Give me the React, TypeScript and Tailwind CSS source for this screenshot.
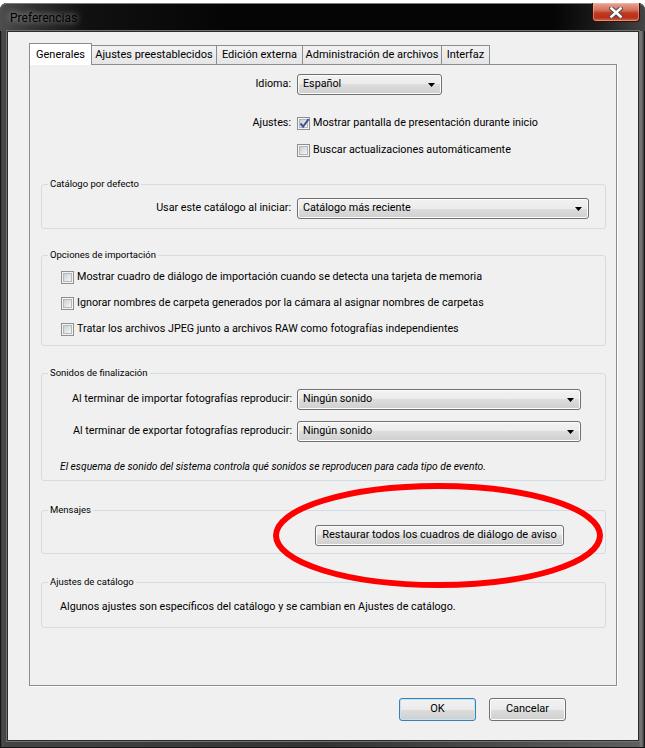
import React from 'react';

type ComboProps = { value: string; className: string };

function Combo({ value, className }: ComboProps) {
  return (
    <div
      className={`flex h-[21px] items-center justify-between rounded-[3px] border border-[#707070] bg-[linear-gradient(#f2f2f2_0%,#ebebeb_50%,#dddddd_50%,#cfcfcf_100%)] pl-[5px] pr-[6px] shadow-[inset_0_0_0_1px_#fcfcfc] ${className}`}
    >
      <span className="text-[10.75px] leading-none">{value}</span>
      <svg width="7" height="4" viewBox="0 0 7 4">
        <path d="M0 0h7L3.5 4z" fill="#000" />
      </svg>
    </div>
  );
}

function Checkbox({ checked = false }: { checked?: boolean }) {
  return (
    <span className="flex h-[13px] w-[13px] shrink-0 items-center justify-center border border-[#8e8f8f] bg-[#f4f4f4]">
      <span className="relative flex h-[9px] w-[9px] items-center justify-center border border-[#b3b8bd] bg-[linear-gradient(135deg,#cbcfd5,#f6f6f6)]">
        {checked && (
          <svg className="absolute -left-[1px] -top-[2px]" width="11" height="11" viewBox="0 0 11 11">
            <path d="M1.5 5.5l2.6 3.2L9.6 1.2" fill="none" stroke="#41539a" strokeWidth="2" />
          </svg>
        )}
      </span>
    </span>
  );
}

function CheckRow({ checked, label }: { checked?: boolean; label: string }) {
  return (
    <div className="flex h-[17px] items-center gap-[3px]">
      <Checkbox checked={checked} />
      <span className="text-[10.75px] leading-none">{label}</span>
    </div>
  );
}

function WinButton({ label, className, primary }: { label: string; className: string; primary?: boolean }) {
  return (
    <div
      className={`flex items-center justify-center rounded-[3px] border bg-[linear-gradient(#f2f2f2_0%,#ebebeb_50%,#dddddd_50%,#cfcfcf_100%)] text-[11px] ${
        primary
          ? 'border-[#3c7fb1] shadow-[inset_0_0_0_1px_#bfe3f7]'
          : 'border-[#707070] shadow-[inset_0_0_0_1px_#fcfcfc]'
      } ${className}`}
    >
      {label}
    </div>
  );
}

function Group({ title, className, children }: { title: string; className: string; children: React.ReactNode }) {
  return (
    <fieldset className={`ml-[11px] w-[565px] rounded-[3px] border border-[#d2dce3] ${className}`}>
      <legend className="ml-[6px] h-[12px] px-[2px] text-[9.5px] leading-[12px]">{title}</legend>
      {children}
    </fieldset>
  );
}

const tabs = ['Ajustes preestablecidos', 'Edición externa', 'Administración de archivos', 'Interfaz'];
const tabWidths = ['w-[125px]', 'w-[86px]', 'w-[139px]', 'w-[48px]'];

export default function App() {
  return (
    <div className="relative h-[748px] w-[645px] overflow-hidden bg-white font-['Roboto','Liberation_Sans',sans-serif] text-black">
      {/* window frame */}
      <div className="mt-[3px] flex h-[745px] flex-col rounded-t-[7px] bg-[linear-gradient(90deg,#1c1c1c_0px,#4a4a4a_2px,#444_6px,#333_50%,#5e5e5e_calc(100%-6px),#7c7c7c_calc(100%-4px),#262626_100%)] shadow-[inset_0_0_0_1px_#161616]">
        <div className="flex h-[28px] items-start rounded-t-[7px] bg-[linear-gradient(90deg,#4e4e4e_0%,#333_5%,#111_13%,#050505_35%,#050505_86%,#181818_92%,#444_100%)] shadow-[inset_0_1px_0_#7a7a7a]">
          <span className="mt-[1px] self-center pl-[10px] text-[12px] text-black [text-shadow:0_0_6px_rgba(255,255,255,0.5),0_0_10px_rgba(255,255,255,0.3)]">
            Preferencias
          </span>
          <div className="ml-auto mr-[5px] flex h-[19px] w-[48px] items-center justify-center rounded-b-[4px] border border-t-0 border-[#3a0d06] bg-[linear-gradient(#e8a594_0%,#d2705a_40%,#c23b1f_55%,#b5311a_80%,#d0664b_100%)] shadow-[inset_0_0_0_1px_rgba(255,200,190,0.45)]">
            <svg width="14" height="11" viewBox="0 0 14 11">
              <path d="M2.5 1.5l9 8M11.5 1.5l-9 8" stroke="#4a4a4a" strokeWidth="4.5" strokeLinecap="square" />
              <path d="M2.5 1.5l9 8M11.5 1.5l-9 8" stroke="#fff" strokeWidth="2.6" strokeLinecap="square" />
            </svg>
          </div>
        </div>

        {/* client area */}
        <div className="ml-[7px] mr-[6px] h-[710px] border border-[#2c2c2c] bg-[#f0f0f0] pl-[21px] pt-[11px] shadow-[0_0_0_1px_#707070]">
          {/* tabs */}
          <div className="relative z-10 -mb-px flex h-[22px] items-end">
            <div className="flex h-[22px] w-[63px] items-start justify-center border border-b-0 border-[#898c95] bg-white pt-[3px] text-[11px]">
              Generales
            </div>
            {tabs.map((t, i) => (
              <div
                key={t}
                className={`flex h-[20px] items-center justify-center border border-l-0 border-[#898c95] bg-[linear-gradient(#f2f2f2,#e5e5e5)] text-[11px] ${tabWidths[i]}`}
              >
                {t}
              </div>
            ))}
          </div>

          {/* tab page */}
          <div className="h-[622px] w-[588px] border border-[#898c95] bg-[#f0f0f0] shadow-[1px_1px_0_#fff]">
            <div className="mt-[9px] flex items-center">
              <span className="w-[262px] pr-[1px] text-right text-[10.75px]">Idioma:</span>
              <Combo value="Español" className="ml-[5px] w-[145px]" />
            </div>
            <div className="mt-[20px] flex items-center">
              <span className="w-[262px] pr-[1px] text-right text-[10.75px]">Ajustes:</span>
              <div className="ml-[5px]">
                <CheckRow checked label="Mostrar pantalla de presentación durante inicio" />
              </div>
            </div>
            <div className="ml-[267px] mt-[10px]">
              <CheckRow label="Buscar actualizaciones automáticamente" />
            </div>

            <Group title="Catálogo por defecto" className="mt-[19px] pb-[9px] pt-[8px]">
              <div className="flex items-center">
                <span className="w-[249px] text-right text-[10.75px]">Usar este catálogo al iniciar:</span>
                <Combo value="Catálogo más reciente" className="ml-[6px] w-[292px]" />
              </div>
            </Group>

            <Group title="Opciones de importación" className="mt-[20px] pb-[7px] pt-[8px]">
              <div className="flex flex-col gap-[9px] pl-[19px]">
                <CheckRow label="Mostrar cuadro de diálogo de importación cuando se detecta una tarjeta de memoria" />
                <CheckRow label="Ignorar nombres de carpeta generados por la cámara al asignar nombres de carpetas" />
                <CheckRow label="Tratar los archivos JPEG junto a archivos RAW como fotografías independientes" />
              </div>
            </Group>

            <Group title="Sonidos de finalización" className="mt-[21px] pb-[7px] pt-[10px]">
              <div className="flex flex-col gap-[11px]">
                <div className="flex items-center">
                  <span className="w-[250px] text-right text-[10.75px]">Al terminar de importar fotografías reproducir:</span>
                  <Combo value="Ningún sonido" className="ml-[5px] w-[284px]" />
                </div>
                <div className="flex items-center">
                  <span className="w-[250px] text-right text-[10.75px]">Al terminar de exportar fotografías reproducir:</span>
                  <Combo value="Ningún sonido" className="ml-[5px] w-[284px]" />
                </div>
              </div>
              <p className="mt-[18px] pl-[18px] text-[10.25px] italic leading-[13px]">
                El esquema de sonido del sistema controla qué sonidos se reproducen para cada tipo de evento.
              </p>
            </Group>

            <Group title="Mensajes" className="mt-[23px] pb-[7px] pt-[9px]">
              <WinButton label="Restaurar todos los cuadros de diálogo de aviso" className="ml-[273px] h-[21px] w-[249px]" />
            </Group>

            <Group title="Ajustes de catálogo" className="mt-[22px] pb-[14px] pt-[12px]">
              <p className="pl-[18px] text-[10.75px] leading-[13px]">
                Algunos ajustes son específicos del catálogo y se cambian en Ajustes de catálogo.
              </p>
            </Group>
          </div>

          <div className="mt-[12px] flex justify-end gap-[13px] pr-[72px]">
            <WinButton label="OK" primary className="h-[23px] w-[77px]" />
            <WinButton label="Cancelar" className="h-[23px] w-[77px]" />
          </div>
        </div>
      </div>

      {/* red marker ring */}
      <svg className="absolute left-[273px] top-[483px]" width="330" height="105" viewBox="0 0 330 105">
        <ellipse cx="165" cy="52.5" rx="162" ry="49.5" fill="none" stroke="#fe0000" strokeWidth="6" />
      </svg>
    </div>
  );
}
